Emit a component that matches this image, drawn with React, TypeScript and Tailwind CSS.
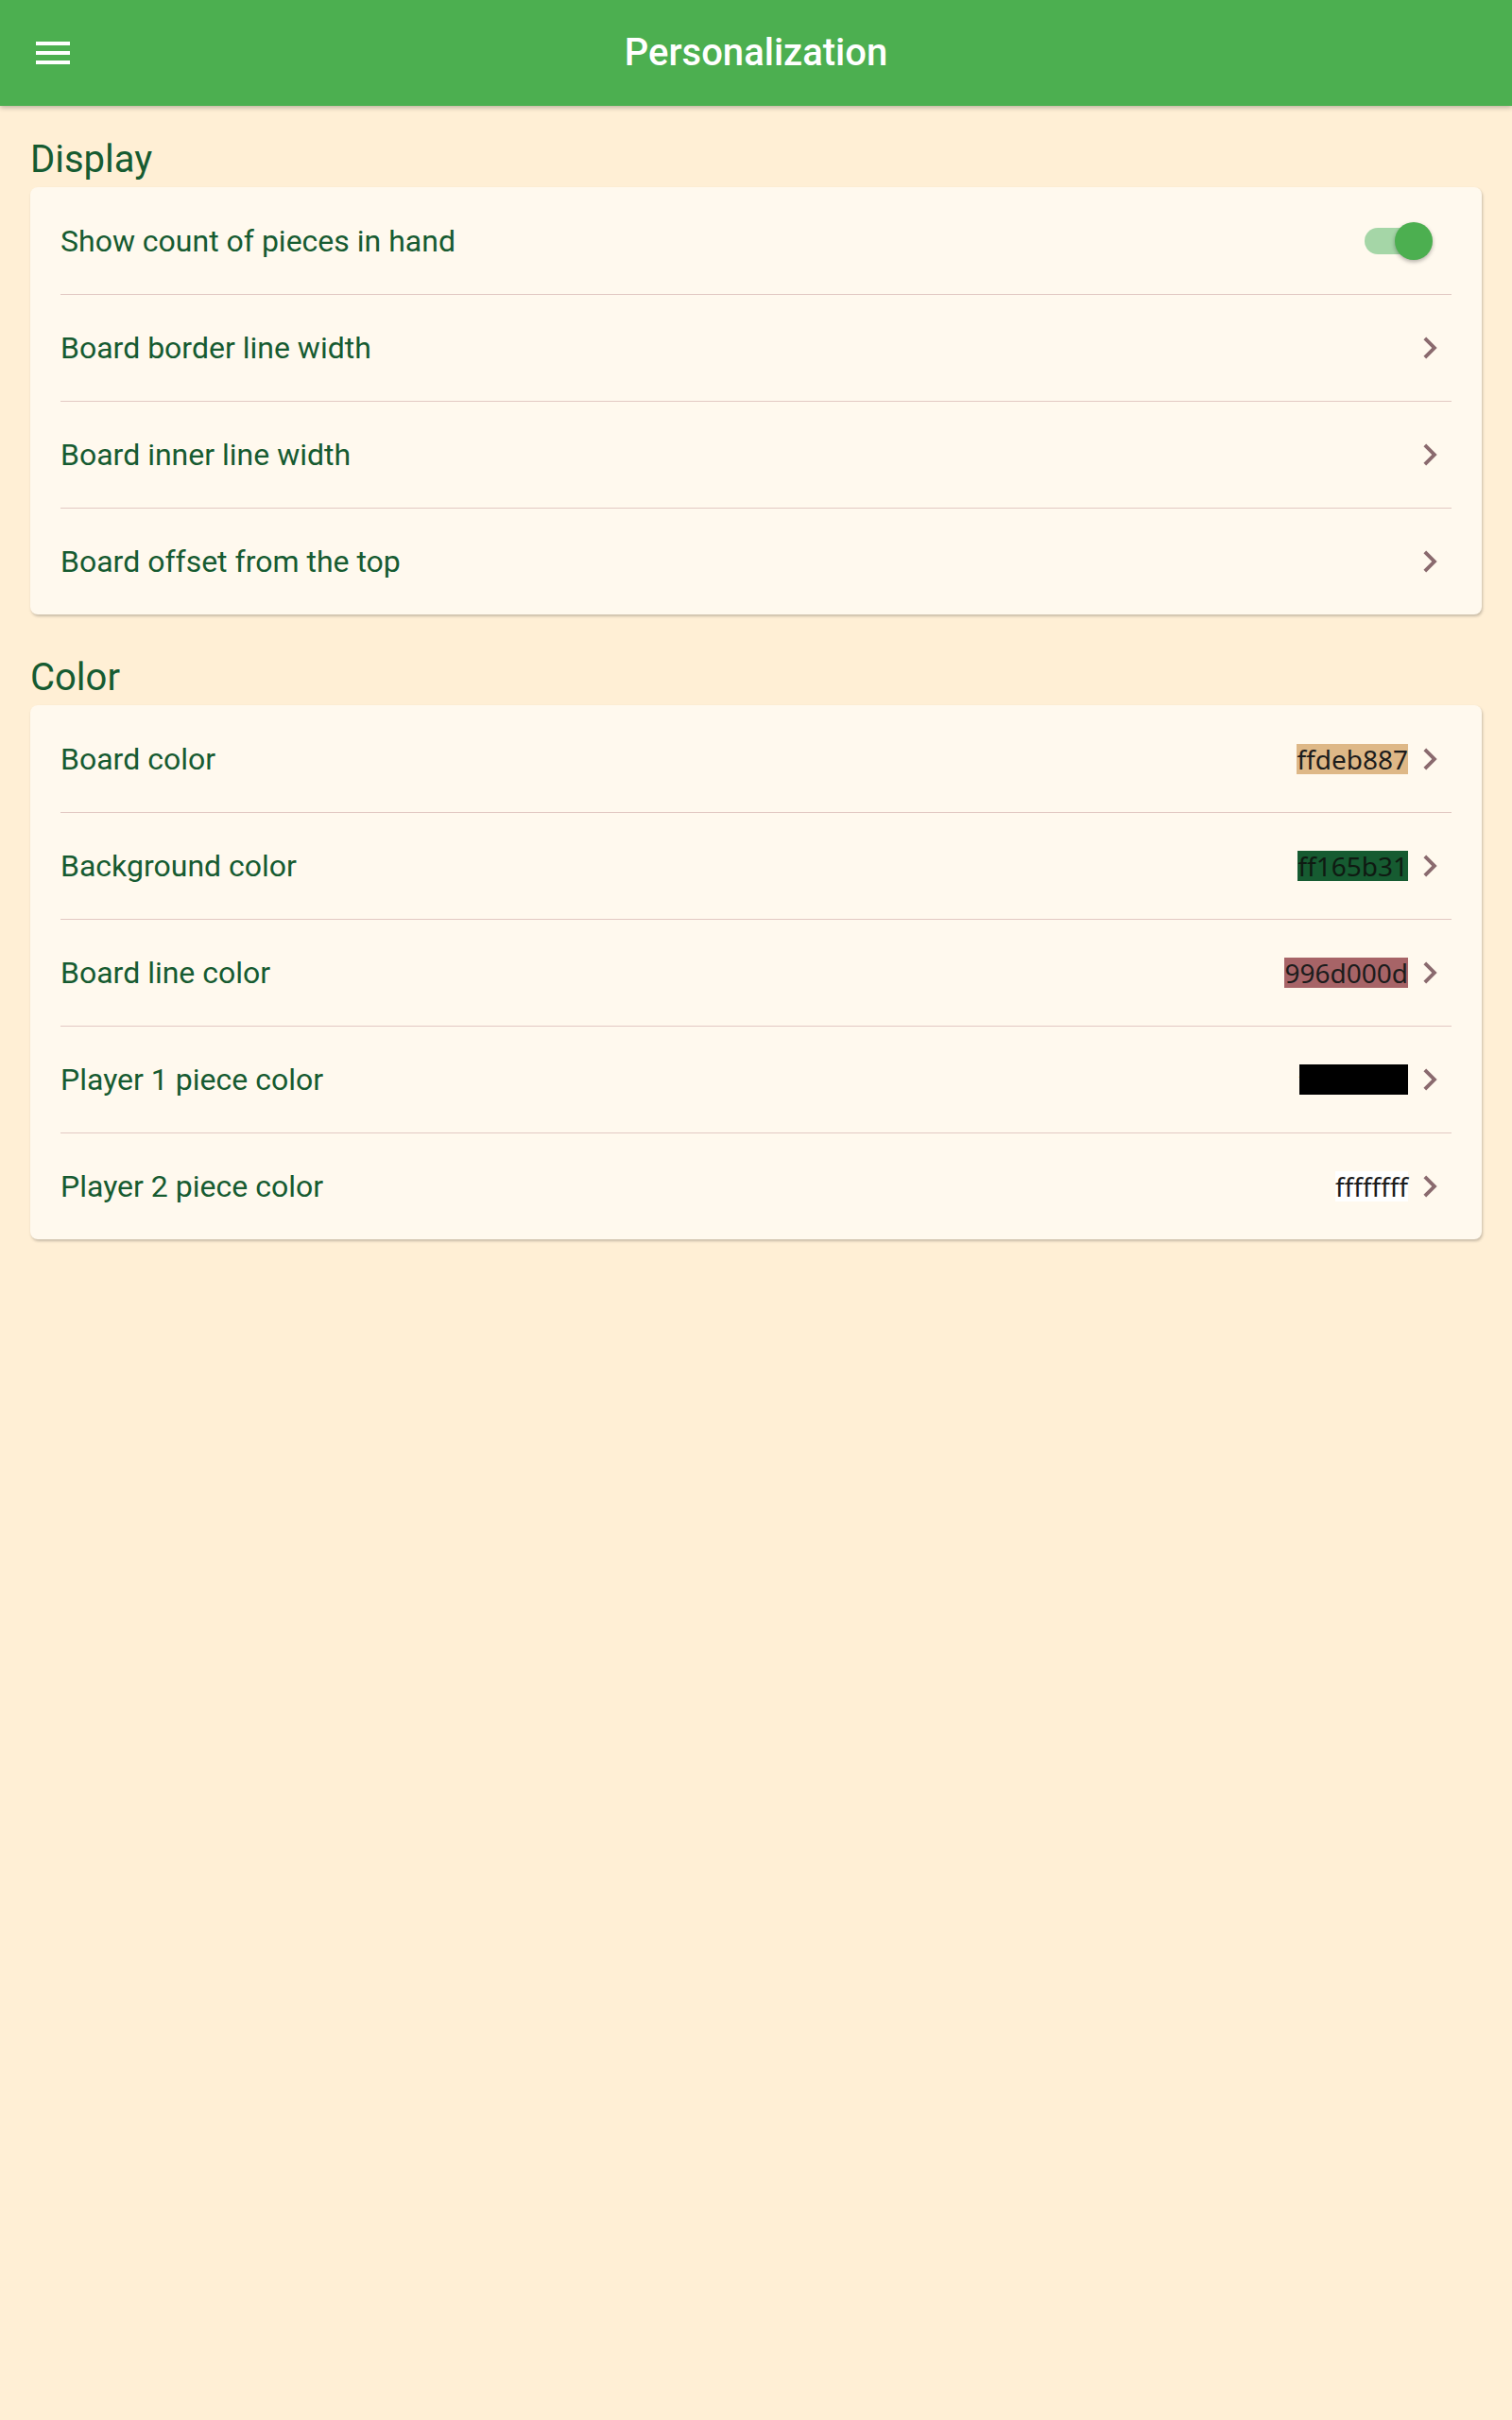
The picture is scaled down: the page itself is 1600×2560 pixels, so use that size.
const labelFont = { fontFamily: "Roboto, 'Liberation Sans', sans-serif" };

type ColorRow = {
  label: string;
  value: string;
  chip: string;
};

const colorRows: ColorRow[] = [
  { label: "Board color", value: "ffdeb887", chip: "bg-[#deb887] text-[#1c1c1c]" },
  { label: "Background color", value: "ff165b31", chip: "bg-[#165b31] text-[#0f1a12]" },
  { label: "Board line color", value: "996d000d", chip: "bg-[#6d000d99] text-[#1c1c1c]" },
  { label: "Player 1 piece color", value: "ff000000", chip: "bg-[#000000] text-[#000000]" },
  { label: "Player 2 piece color", value: "ffffffff", chip: "bg-[#ffffff] text-[#1c1c1c]" },
];

const widthRows = ["Board border line width", "Board inner line width", "Board offset from the top"];

function Chevron() {
  return (
    <svg width="46" height="46" viewBox="0 0 24 24" className="shrink-0">
      <path d="M10 6L8.59 7.41 13.17 12l-4.58 4.59L10 18l6-6z" fill="#8a6a6e" />
    </svg>
  );
}

function Toggle() {
  return (
    <div className="relative mr-[20px] flex h-[40px] w-[72px] items-center">
      <div className="h-[28px] w-[66px] rounded-full bg-[#a5d6a7]" />
      <div className="absolute top-0 right-0 h-[40px] w-[40px] rounded-full bg-[#4caf50] shadow-[0_2px_4px_rgba(0,0,0,0.3)]" />
    </div>
  );
}

function Row({ label, children, first }: { label: string; children: React.ReactNode; first?: boolean }) {
  return (
    <div
      className={
        "flex h-[113px] items-center justify-between" + (first ? "" : " border-t border-[#e2c9c3]")
      }
    >
      <span className="text-[32px] text-[#165b31]" style={labelFont}>
        {label}
      </span>
      {children}
    </div>
  );
}

function Card({ children }: { children: React.ReactNode }) {
  return (
    <div className="mt-[6px] rounded-[8px] bg-[#fff9ee] px-[32px] shadow-[1px_2px_3px_rgba(0,0,0,0.22)]">
      {children}
    </div>
  );
}

function SectionTitle({ children }: { children: React.ReactNode }) {
  return (
    <h2 className="text-[40px] leading-[47px] text-[#165b31]" style={labelFont}>
      {children}
    </h2>
  );
}

export default function App() {
  return (
    <div className="min-h-screen bg-[#ffefd5]">
      <header className="grid h-[112px] grid-cols-[1fr_auto_1fr] items-center bg-[#4caf50] shadow-[0_2px_5px_rgba(0,0,0,0.25)]">
        <div className="pl-[38px]">
          <svg width="36" height="24" viewBox="0 0 36 24">
            <rect x="0" y="0" width="36" height="4" fill="#fff" />
            <rect x="0" y="10" width="36" height="4" fill="#fff" />
            <rect x="0" y="20" width="36" height="4" fill="#fff" />
          </svg>
        </div>
        <h1 className="text-[40px] font-medium text-white" style={labelFont}>
          Personalization
        </h1>
        <div />
      </header>

      <main className="px-[32px] pt-[33px]">
        <section>
          <SectionTitle>Display</SectionTitle>
          <Card>
            <Row label="Show count of pieces in hand" first>
              <Toggle />
            </Row>
            {widthRows.map((label) => (
              <Row key={label} label={label}>
                <Chevron />
              </Row>
            ))}
          </Card>
        </section>

        <section className="mt-[43px]">
          <SectionTitle>Color</SectionTitle>
          <Card>
            {colorRows.map((row, i) => (
              <Row key={row.label} label={row.label} first={i === 0}>
                <div className="flex items-center">
                  <span
                    className={"text-[28px] leading-[32px] " + row.chip}
                    style={{ fontFamily: "'Noto Sans', 'DejaVu Sans', sans-serif" }}
                  >
                    {row.value}
                  </span>
                  <Chevron />
                </div>
              </Row>
            ))}
          </Card>
        </section>
      </main>
    </div>
  );
}
